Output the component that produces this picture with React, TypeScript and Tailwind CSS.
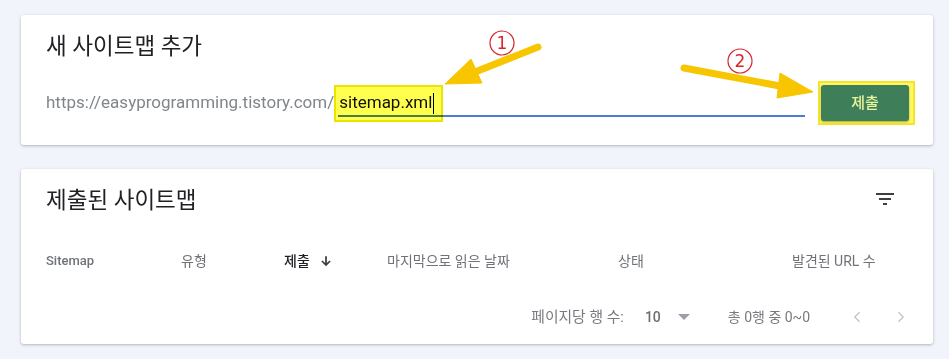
import { ChevronLeft, ChevronRight } from "lucide-react";

const ko = { fontFamily: "Roboto, 'Noto Sans CJK KR', sans-serif" };

function Arrows(): JSX.Element {
  return (
    <svg className="pointer-events-none absolute left-0 top-0" width="949" height="359" viewBox="0 0 949 359">
      <g fill="#f7c600" stroke="#f7c600">
        <line x1="538" y1="47" x2="470" y2="74" strokeWidth="7" strokeLinecap="round" />
        <polygon points="445,84 471,59 482,83" strokeWidth="1" strokeLinejoin="round" />
        <line x1="684" y1="68" x2="785" y2="87" strokeWidth="7" strokeLinecap="round" />
        <polygon points="813,92 780,73 777,98" strokeWidth="1" strokeLinejoin="round" />
      </g>
      <g fill="none" stroke="#d8242c" strokeWidth="1.2">
        <circle cx="502" cy="43" r="12" />
        <circle cx="740" cy="61" r="12" />
      </g>
      <g fill="#d8242c" fontFamily="'DejaVu Sans', sans-serif" fontSize="17" textAnchor="middle">
        <text x="502" y="49">1</text>
        <text x="740" y="67">2</text>
      </g>
    </svg>
  );
}

export default function App(): JSX.Element {
  return (
    <div className="relative h-[359px] w-[949px] bg-[#f1f4fb] pl-[21px] pr-[16px] pt-[15px]" style={ko}>
      {/* 새 사이트맵 추가 */}
      <div className="h-[130px] rounded-[3px] bg-white pl-[25px] pr-[18px] pt-[16px] shadow-[0_1px_3px_rgba(60,64,67,0.35)]">
        <div className="h-[30px] text-[22.5px] leading-[30px] text-[#202124]">새 사이트맵 추가</div>
        <div className="mt-[20px] flex h-[44px] items-center">
          <span className="mt-[-1px] text-[17px] text-[#80868b]">https://easyprogramming.tistory.com/</span>
          <div className="relative flex h-[44px] flex-1 items-center">
            <div className="absolute bottom-[8px] left-[4px] right-0 h-[2px] bg-[#4a7fd0]" />
            <span className="relative ml-[5px] flex items-center text-[17px] text-[#111]">
              sitemap.xml
              <span className="ml-[1px] inline-block h-[21px] w-[1px] bg-black" />
            </span>
            <div className="absolute left-0 top-[4px] h-[37px] w-[109px] border-2 border-[#ece400] bg-[#ffff50] mix-blend-multiply" />
          </div>
          <div className="ml-[13px] flex h-[44px] w-[97px] items-center border-2 border-[#f3e52a] bg-[#fff860] pl-[1px]">
            <div className="flex h-[36px] w-[88px] items-center justify-center rounded-[3px] bg-[#3e7f5a] text-[15px] font-medium text-[#eaf49c] shadow-[0_1px_2px_rgba(0,0,0,0.35)]">
              제출
            </div>
          </div>
        </div>
      </div>

      {/* 제출된 사이트맵 */}
      <div className="mt-[24px] h-[175px] rounded-[3px] bg-white pl-[25px] pr-[23px] pt-[16px] shadow-[0_1px_3px_rgba(60,64,67,0.35)]">
        <div className="flex h-[30px] items-center justify-between">
          <span className="text-[22.5px] leading-[30px] text-[#202124]">제출된 사이트맵</span>
          <svg width="24" height="24" viewBox="0 0 24 24" className="mr-[13px] mt-[-3px]" fill="#3c4043">
            <path d="M10 18h4v-2h-4v2zM3 6v2h18V6H3zm3 7h12v-2H6v2z" />
          </svg>
        </div>
        <div className="mt-[32px] grid h-[28px] grid-cols-[135px_103px_103px_231px_174px_1fr] items-center text-[14px] text-[#6f7378]">
          <span className="text-[13px] font-medium">Sitemap</span>
          <span>유형</span>
          <span className="flex items-center font-medium text-[#202124]">
            제출
            <svg width="14" height="14" viewBox="0 0 24 24" className="ml-[9px]" fill="none" stroke="#3c4043" strokeWidth="3">
              <path d="M12 4v15M5 12l7 7 7-7" />
            </svg>
          </span>
          <span>마지막으로 읽은 날짜</span>
          <span>상태</span>
          <span>발견된 URL 수</span>
        </div>
        <div className="mt-[30px] flex h-[24px] items-center justify-end text-[14px] text-[#777a7f]">
          <span className="text-[14.8px]">페이지당 행 수:</span>
          <span className="ml-[21px] font-medium text-[#6a6e73]">10</span>
          <svg width="12" height="8" viewBox="0 0 12 8" className="ml-[17px]" fill="#9aa0a6">
            <path d="M0 1h12L6 7z" />
          </svg>
          <span className="ml-[38px]">총 0행 중 0~0</span>
          <ChevronLeft className="ml-[38px]" size={18} color="#bdc1c6" strokeWidth={1.5} />
          <ChevronRight className="ml-[26px]" size={18} color="#bdc1c6" strokeWidth={1.5} />
        </div>
      </div>
      <Arrows />
    </div>
  );
}
